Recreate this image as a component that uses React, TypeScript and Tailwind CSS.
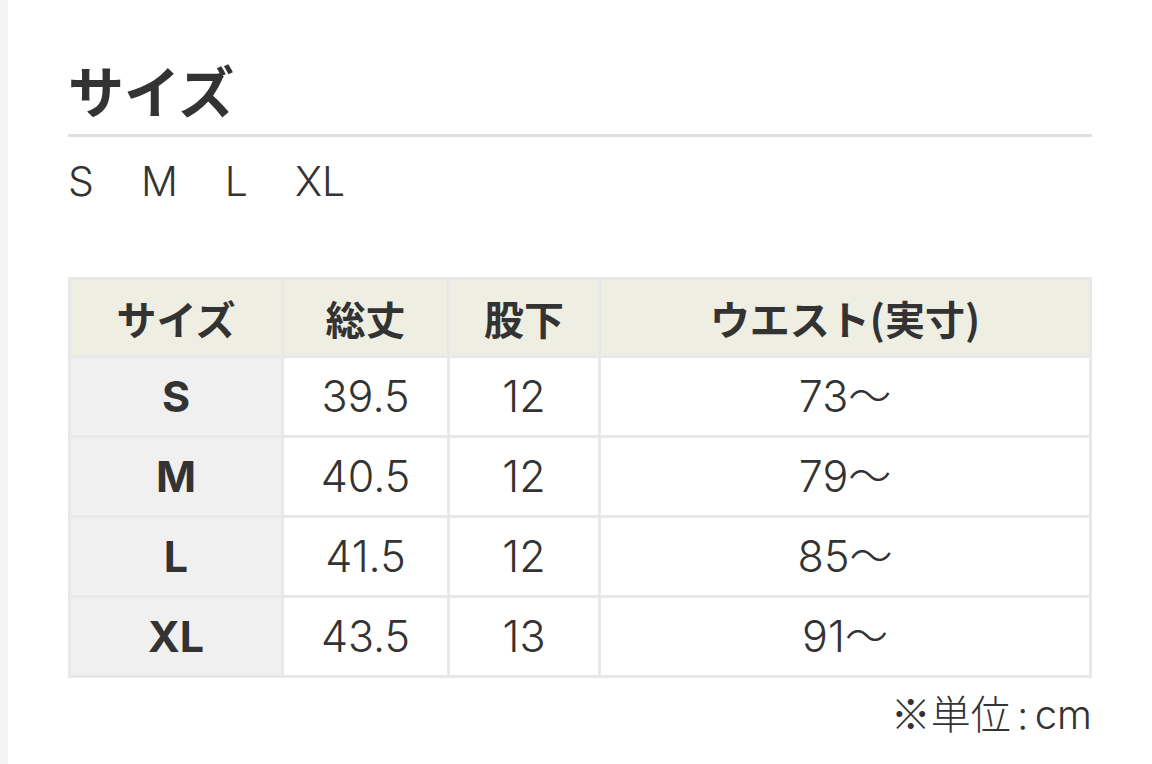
import React from "react";

const rows = [
  { s: "S", a: "39.5", b: "12", c: "73〜" },
  { s: "M", a: "40.5", b: "12", c: "79〜" },
  { s: "L", a: "41.5", b: "12", c: "85〜" },
  { s: "XL", a: "43.5", b: "13", c: "91〜" },
];

const cell =
  "flex h-[77px] items-center justify-center text-[43px] font-[Inter,'Noto_Sans_CJK_JP',sans-serif]";

export default function App() {
  return (
    <div className="flex min-h-screen w-full bg-white font-['Noto_Sans_CJK_JP','Noto_Sans',sans-serif] text-[#333333]">
      <div className="w-[8px] shrink-0 bg-[#f3f3f3]" />
      <main className="flex-1 px-[60px] pt-[53px]">
        <h2 className="border-b-[3px] border-[#e0e0e0] pb-[9px] text-[56px] font-bold leading-[72px]">
          サイズ
        </h2>
        <div className="mt-[18px] flex gap-[47px] font-[Inter,'Noto_Sans_CJK_JP',sans-serif] text-[41px] font-light leading-[52px]">
          <span>S</span>
          <span>M</span>
          <span>L</span>
          <span>XL</span>
        </div>
        <div className="mt-[70px] grid grid-cols-[210px_163px_148px_1fr] gap-[3px] bg-[#e8e8e8] p-[3px]">
          {["サイズ", "総丈", "股下", "ウエスト(実寸)"].map((h) => (
            <div
              key={h}
              className="flex h-[75px] items-center justify-center bg-[#efeee3] text-[40px] font-bold"
            >
              {h}
            </div>
          ))}
          {rows.map((r) => (
            <React.Fragment key={r.s}>
              <div className={`${cell} bg-[#f0f0f0] font-bold`}>{r.s}</div>
              <div className={`${cell} bg-white font-light`}>{r.a}</div>
              <div className={`${cell} bg-white font-light`}>{r.b}</div>
              <div className={`${cell} bg-white font-light`}>{r.c}</div>
            </React.Fragment>
          ))}
        </div>
        <p className="mt-[8px] text-right text-[40px] font-light leading-[52px]">
          ※単位<span className="mx-[7px]">:</span>
          <span className="font-[Inter,'Noto_Sans_CJK_JP',sans-serif]">cm</span>
        </p>
      </main>
    </div>
  );
}
